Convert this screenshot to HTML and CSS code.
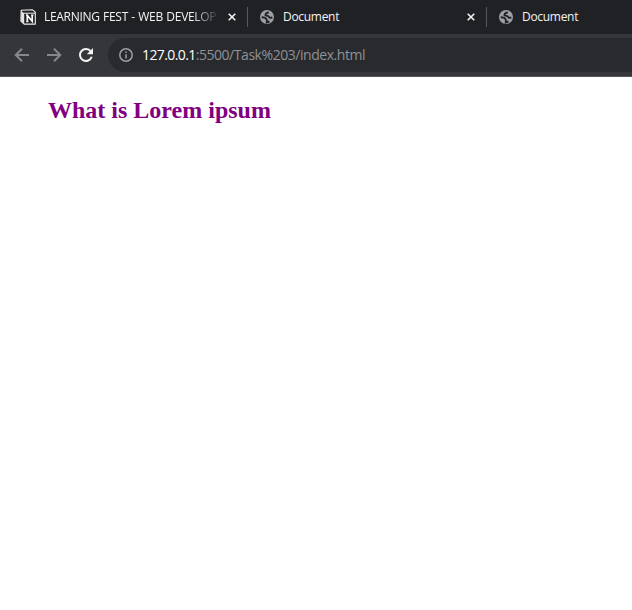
FILE: index.html
```html
<!DOCTYPE html>
<html lang="en">
<head>
<meta charset="utf-8">
<title>Document</title>
<link rel="stylesheet" href="styles.css">
</head>
<body>
<header class="tabs">
  <div class="tab first">
    <svg class="favicon" viewBox="0 0 16 16"><path d="M1.2 1.2 12.3.7 15.3 3.2V15.1H4.2L.9 12Z" fill="#202124" stroke="#eee" stroke-width="1.1" stroke-linejoin="round"/><path d="M1.3 2 4.2 4.3V14.8L1.1 11.7Z" fill="#e5e5e5"/><path d="M4 4.2H15" stroke="#eee"/><path d="M7.3 12.5V6.4L12.2 12.2V6" fill="none" stroke="#fff" stroke-width="1.7"/><path d="M6 6.3H8M11 6H13.6M6 12.7H8.6" stroke="#fff"/></svg>
    <span class="title learning">LEARNING FEST - WEB DEVELOP</span>
    <svg class="close" viewBox="0 0 8 8"><path d="M.7.7 7.3 7.3M7.3.7.7 7.3"/></svg>
  </div>
  <div class="tab">
    <svg class="globe" viewBox="0 0 14 14"><circle cx="7" cy="7" r="7"/><path class="water" d="M8.8 2.5C7 2.5 5.3 3.5 5.5 5.3 6.8 6.3 8.6 5.3 9 6.8 9.4 8.3 10.6 8 12.3 7.5"/><path class="water" d="M1.7 7.2C3.8 7.2 5.8 7.8 6.5 9.2 7.1 10 7 11 6.8 12.3L9.5 11.5"/></svg>
    <span class="title">Document</span>
    <svg class="close" viewBox="0 0 8 8"><path d="M.7.7 7.3 7.3M7.3.7.7 7.3"/></svg>
  </div>
  <div class="tab">
    <svg class="globe" viewBox="0 0 14 14"><circle cx="7" cy="7" r="7"/><path class="water" d="M8.8 2.5C7 2.5 5.3 3.5 5.5 5.3 6.8 6.3 8.6 5.3 9 6.8 9.4 8.3 10.6 8 12.3 7.5"/><path class="water" d="M1.7 7.2C3.8 7.2 5.8 7.8 6.5 9.2 7.1 10 7 11 6.8 12.3L9.5 11.5"/></svg>
    <span class="title">Document</span>
  </div>
</header>
<nav class="toolbar">
  <svg class="nav" viewBox="0 0 16 16"><path d="M15 8H2M8 1.7 1.7 8 8 14.3"/></svg>
  <svg class="nav" viewBox="0 0 16 16"><path d="M1 8H14M8 1.7 14.3 8 8 14.3"/></svg>
  <svg class="nav reload" viewBox="0 0 16 16"><path d="M12.8 4.4A6 6 0 1 0 13.7 9.7"/><path class="tip" d="M15 1V7.2H8.8Z"/></svg>
  <div class="address">
    <svg class="info" viewBox="0 0 14 14"><circle cx="7" cy="7" r="6.2"/><path d="M7 6.2V10.5M7 3.5V5"/></svg>
    <span class="url"><span class="host">127.0.0.1</span>:5500/Task%203/index.html</span>
  </div>
</nav>
<main><h1>What is Lorem ipsum</h1></main>
</body>
</html>
```
FILE: styles.css
```css
* { box-sizing: border-box; }
body { margin: 0; height: 610px; overflow: hidden; background: #fff; font-family: "Open Sans", "Noto Sans", sans-serif; }
svg { display: block; flex: none; }
.tabs { height: 34px; background: #202124; display: flex; overflow: hidden; }
.tab { width: 239px; flex: none; display: flex; align-items: center; padding: 0 11px 0 13px; position: relative; }
.tab.first { width: 247px; padding: 0 11px 0 20px; }
.tab + .tab::before { content: ""; position: absolute; left: 0; top: 7px; width: 1px; height: 20px; background: #55575b; }
.favicon { width: 16px; height: 16px; margin-right: 8px; }
.globe { width: 14px; height: 14px; margin-right: 9px; }
.globe circle { fill: #9aa0a6; }
.globe .water { fill: none; stroke: #202124; stroke-width: 1.9; }
.title { color: #f1f3f4; font-size: 12px; line-height: 16px; white-space: nowrap; letter-spacing: -.3px; }
.tab:not(.first) .title { letter-spacing: -.3px; }
.learning { width: 173px; letter-spacing: -.3px; word-spacing: .6px; -webkit-mask-image: linear-gradient(to right, #000 148px, transparent 176px); mask-image: linear-gradient(to right, #000 148px, transparent 176px); }
.close { width: 8px; height: 8px; margin-left: auto; stroke: #f1f3f4; stroke-width: 1.6; fill: none; }
.toolbar { height: 43px; background: #35363a; border-bottom: 1px solid #55535a; display: flex; align-items: center; padding-left: 14px; gap: 16px; }
.nav { width: 16px; height: 16px; fill: none; stroke: #85878a; stroke-width: 2; }
.nav.reload { stroke: #f1f3f4; }
.nav .tip { fill: #f1f3f4; stroke: none; }
.address { flex: 1; height: 34px; margin-left: -2px; background: #282a2d; border-radius: 17px 0 0 17px; display: flex; align-items: center; padding-left: 11px; }
.info { width: 14px; height: 14px; margin-right: 9px; fill: none; stroke: #9aa0a6; stroke-width: 1.5; }
.url { font-size: 14px; line-height: 20px; color: #8f9195; white-space: nowrap; letter-spacing: -.45px; }
.host { color: #fff; letter-spacing: -.6px; }
main { padding: 19px 48px; }
h1 { margin: 0; font: 700 24px/28px "Liberation Serif", serif; color: #800080; }
```
